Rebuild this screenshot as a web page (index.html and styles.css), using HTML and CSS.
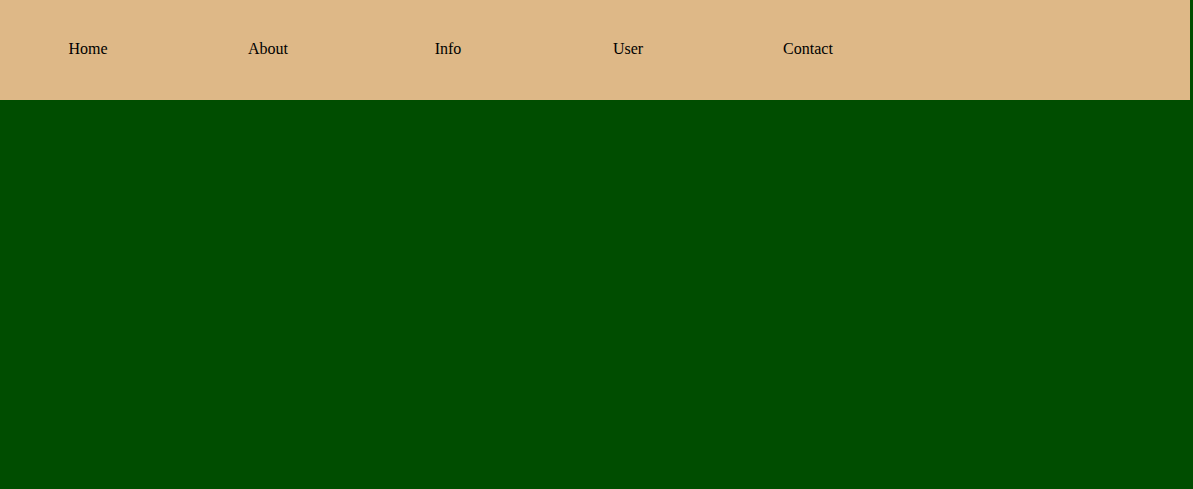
FILE: index.html
```html
<!DOCTYPE html>
<html>
<head>
<meta charset="utf-8">
<link rel="stylesheet" href="styles.css">
</head>
<body>
<header class="topbar">
  <nav class="nav">
    <a class="nav-item" href="#">Home</a>
    <a class="nav-item" href="#">About</a>
    <a class="nav-item" href="#">Info</a>
    <a class="nav-item" href="#">User</a>
    <a class="nav-item" href="#">Contact</a>
  </nav>
</header>
</body>
</html>
```
FILE: styles.css
```css
html, body {
  margin: 0;
  padding: 0;
  background: #004d00;
  height: 100%;
}
.topbar {
  box-sizing: border-box;
  width: 1190px;
  height: 100px;
  padding-bottom: 2px;
  background: #deb887;
  display: flex;
  align-items: center;
}
.nav {
  display: flex;
  gap: 4px;
}
.nav-item {
  width: 176px;
  text-align: center;
  font-family: "Liberation Serif", "Times New Roman", serif;
  font-size: 16px;
  color: #000;
  text-decoration: none;
}
```
